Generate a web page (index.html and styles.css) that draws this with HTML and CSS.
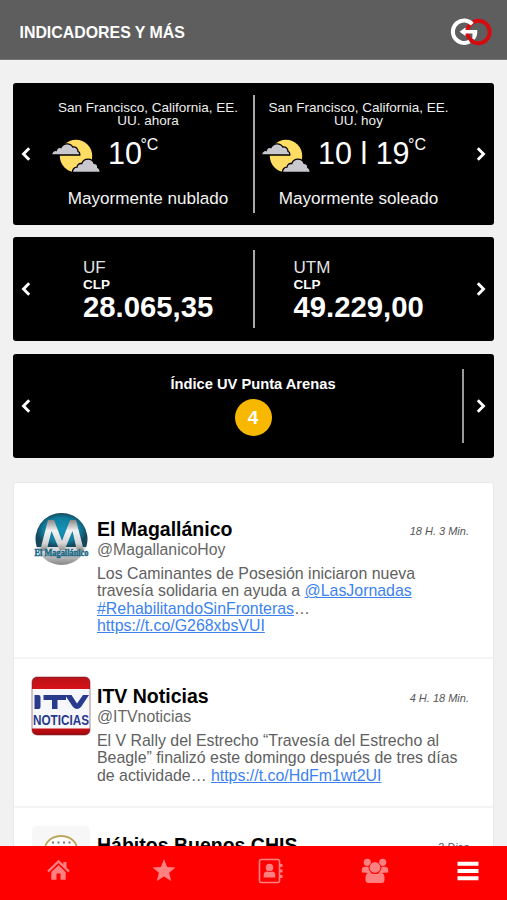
FILE: index.html
```html
<!DOCTYPE html>
<html lang="es">
<head>
<meta charset="utf-8">
<title>Indicadores y más</title>
<link rel="stylesheet" href="styles.css">
</head>
<body>
<svg class="defs" width="0" height="0">
  <symbol id="prev" viewBox="0 0 10 14"><path d="M8.2 1.2 2.5 7l5.700 5.800" fill="none" stroke="#fff" stroke-width="2.900"/></symbol>
  <symbol id="next" viewBox="0 0 10 14"><path d="M1.800 1.200 7.500 7l-5.700 5.800" fill="none" stroke="#fff" stroke-width="2.900"/></symbol>
  <symbol id="weather" viewBox="0 0 50 36">
    <circle cx="25" cy="18" r="16.200" fill="#ffdc64"/>
    <path d="M.5 17c0-3.200 2.400-4.800 4.800-4.500.5-2.600 2.800-3.700 4.700-2.900C12.200 4.800 19.500 4.600 21.700 9c3.200-.3 5.300 1.600 5.300 4.300 1.400.5 2 1.900 1.800 3.700z" fill="#c8c8ce" stroke="#000" stroke-width="1.300"/>
    <path d="M21.500 34.500c-.2-3 1.500-5.200 4.500-5.300.2-2.600 2.300-4.200 4.700-3.500 2.200-6 10.500-5.800 12.300-.4 2.400.2 4.100 1.800 3.700 4.100 1.900.7 2.700 2.600 2.600 5.100z" fill="#c8c8ce" stroke="#000" stroke-width="1.300"/>
  </symbol>
</svg>

<header class="topbar">
  <h1>INDICADORES Y MÁS</h1>
  <svg class="logo" viewBox="0 0 42 28">
    <circle cx="28.500" cy="14" r="11.200" fill="none" stroke="#d60b10" stroke-width="4"/>
    <path d="M22.300 6.100A11.200 11.200 0 1 0 19.500 23.500" fill="none" stroke="#fff" stroke-width="4"/>
    <path d="M9.500 13.700 15.500 9.500V12H27.300Q27.500 18.500 24.500 21.800L22.300 20.500 22.500 15.600H15.500V17.900z" fill="#fff"/>
  </svg>
</header>

<main class="content">
  <section class="card weather">
    <svg class="arrow"><use href="#prev"/></svg>
    <div class="slide">
      <p class="place">San Francisco, California, EE.<br>UU. ahora</p>
      <div class="temp"><svg class="sky"><use href="#weather"/></svg><span class="deg">10</span><span class="unit">°C</span></div>
      <p class="state">Mayormente nublado</p>
    </div>
    <div class="slide ruled">
      <p class="place">San Francisco, California, EE.<br>UU. hoy</p>
      <div class="temp"><svg class="sky"><use href="#weather"/></svg><span class="deg">10 l 19</span><span class="unit">°C</span></div>
      <p class="state">Mayormente soleado</p>
    </div>
    <svg class="arrow"><use href="#next"/></svg>
  </section>

  <section class="card money">
    <svg class="arrow"><use href="#prev"/></svg>
    <div class="slide">
      <p class="name">UF</p><p class="currency">CLP</p><p class="amount">28.065,35</p>
    </div>
    <div class="slide ruled">
      <p class="name">UTM</p><p class="currency">CLP</p><p class="amount">49.229,00</p>
    </div>
    <svg class="arrow"><use href="#next"/></svg>
  </section>

  <section class="card uv">
    <svg class="arrow"><use href="#prev"/></svg>
    <div class="slide wide">
      <p class="uv-title">Índice UV Punta Arenas</p>
      <span class="uv-value">4</span>
    </div>
    <svg class="arrow"><use href="#next"/></svg>
  </section>

  <section class="feed">
    <article class="post">
      <svg class="avatar" viewBox="0 0 60 60">
        <defs>
          <linearGradient id="steel" x1="0" y1="0" x2="0" y2="1"><stop offset="0" stop-color="#888"/><stop offset=".35" stop-color="#f4f4f4"/><stop offset=".75" stop-color="#d5d5d5"/><stop offset="1" stop-color="#888"/></linearGradient>
          <radialGradient id="teal"><stop offset="0" stop-color="#1493b4"/><stop offset=".7" stop-color="#107e9e"/><stop offset="1" stop-color="#17475b"/></radialGradient>
        </defs>
        <circle cx="30.500" cy="30" r="26" fill="url(#steel)"/>
        <path d="M5.800 38a26 26 0 1 1 49.400 0z" fill="url(#teal)"/>
        <path d="M9 42 17 11h6L31 32 39 11H45L53 42H46L41.500 22 33.500 41h-5L20.500 22 15.500 42z" fill="url(#steel)"/>
        <text x="3.500" y="46.500" class="av-mag" textLength="54" lengthAdjust="spacingAndGlyphs">El Magallánico</text>
      </svg>
      <div class="body">
        <div class="head"><h2>El Magallánico</h2><time>18 H. 3 Min.</time></div>
        <p class="handle">@MagallanicoHoy</p>
        <p class="text">Los Caminantes de Posesión iniciaron nueva<br>travesía solidaria en ayuda a <a>@LasJornadas</a><br><a>#RehabilitandoSinFronteras</a>…<br><a>https://t.co/G268xbsVUI</a></p>
      </div>
    </article>

    <article class="post">
      <svg class="avatar" viewBox="0 0 60 60">
        <defs>
          <clipPath id="tile"><rect x="1" y="1" width="58" height="58" rx="5"/></clipPath>
          <linearGradient id="red" x1="0" y1="0" x2="0" y2="1"><stop offset="0" stop-color="#b51318"/><stop offset=".2" stop-color="#d51218"/><stop offset=".88" stop-color="#c40c12"/><stop offset="1" stop-color="#98080c"/></linearGradient>
        </defs>
        <g clip-path="url(#tile)">
          <path d="M0 0h60v60H0z" fill="url(#red)"/>
          <path d="M0 13h60v39.500H0z" fill="#f6f7fa"/>
        </g>
        <rect x="1" y="1" width="58" height="58" rx="5" fill="none" stroke="#6e2630" stroke-opacity=".55"/>
        <path d="M3.500 19h4a2 2 0 0 1 2 2v10a2 2 0 0 1-2 2h-4zM12.500 19H35v5h-8.500v9H21v-9h-8.500zM34 19h6.500l5.500 8.500 6-8.500H58l-8 12q-4 4-8 0z" fill="#293b8d"/>
        <text x="2" y="48.500" class="av-itv" textLength="56" lengthAdjust="spacingAndGlyphs">NOTICIAS</text>
      </svg>
      <div class="body">
        <div class="head"><h2>ITV Noticias</h2><time>4 H. 18 Min.</time></div>
        <p class="handle">@ITVnoticias</p>
        <p class="text">El V Rally del Estrecho “Travesía del Estrecho al<br>Beagle” finalizó este domingo después de tres días<br>de actividade… <a>https://t.co/HdFm1wt2UI</a></p>
      </div>
    </article>

    <article class="post">
      <svg class="avatar" viewBox="0 0 60 60">
        <rect x="1" y="1" width="58" height="58" rx="4" fill="#f7f7f7"/>
        <ellipse cx="30" cy="24" rx="16" ry="13" fill="#fff" stroke="#bda75e" stroke-width="1.800"/>
        <path d="M21 17.500h19" stroke="#777" stroke-width="2" stroke-dasharray="2 3.500"/>
      </svg>
      <div class="body">
        <div class="head"><h2>Hábitos Buenos CHIS</h2><time>2 Dias</time></div>
      </div>
    </article>
  </section>
</main>

<nav class="tabs">
  <svg viewBox="0 0 28 28"><path d="M3 14.500 13.500 4.500 24 14.500" fill="none" stroke="#ff8080" stroke-width="2.400"/><path d="M18.300 5h3.200v7l-3.200-3zM6.300 15 13.500 8.200 20.700 15v7.800h-5.200v-6.300h-4v6.300H6.300z" fill="#ff8080"/></svg>
  <svg viewBox="0 0 28 28"><path d="m14 2.200 3.200 7.700 8.300.6-6.400 5.300 2.100 8.100-7.200-4.400-7.200 4.400 2.100-8.100L2.500 10.500l8.300-.6z" fill="#ff8080"/></svg>
  <svg viewBox="0 0 28 28"><rect x="3.500" y="2.500" width="20" height="23" rx="2" fill="none" stroke="#ff8080" stroke-width="1.600"/><path d="M24 7h2.500v3H24zM24 12.500h2.500v3H24zM24 18h2.500v3H24z" fill="#ff8080"/><circle cx="13.500" cy="10.500" r="3.800" fill="#ff8080"/><path d="M7.700 20.500v-2.300q0-3.700 3.500-3.700 2.300 1.200 4.600 0 3.500 0 3.500 3.700v2.300z" fill="#ff8080"/></svg>
  <svg viewBox="0 0 28 28"><g fill="#ff8080"><circle cx="6.300" cy="5.300" r="3.600"/><circle cx="21.700" cy="5.300" r="3.600"/><path d="M.800 15.500V13q0-3.300 3.300-3.300h3.300q.5 3.900 2.800 6l-2 .3zM27.200 15.500V13q0-3.300-3.300-3.300h-3.300q-.5 3.900-2.800 6l2 .3z"/><circle cx="14" cy="10.500" r="5.800" stroke="#f00" stroke-width=".8"/><path d="M4.500 23v-2.500q0-4.800 4.300-4.800 5.200 2.600 10.400 0 4.300 0 4.300 4.800V23q0 3-3 3h-13q-3 0-3-3z"/></g></svg>
  <svg viewBox="0 0 28 28"><path d="M3.500 6.700h21M3.500 14h21M3.500 21.200h21" stroke="#fff" stroke-width="4" stroke-linecap="butt"/></svg>
</nav>
</body>
</html>
```
FILE: styles.css
```css
* { box-sizing: border-box; }

body {
  margin: 0;
  height: 900px;
  display: flex;
  flex-direction: column;
  overflow: hidden;
  background: #f1f1f1;
  font-family: "Liberation Sans", Arial, sans-serif;
}

h1, h2, p { margin: 0; }
.defs { position: absolute; }

.topbar {
  flex: none;
  height: 60px;
  padding: 7px 15px 0 19.500px;
  display: flex;
  align-items: center;
  justify-content: space-between;
  background: #5e5e5e;
  border-bottom: 1px solid #777;
}
.topbar h1 { color: #fff; font-size: 15.900px; line-height: 20px; }
.logo { width: 42px; height: 28px; margin-top: -3px; }

.content {
  flex: 1;
  min-height: 0;
  overflow: hidden;
  padding: 22.500px 13px 0;
}

.card {
  display: grid;
  grid-template-columns: 30px 210px 211px 30px;
  align-items: center;
  margin-bottom: 12.500px;
  border-radius: 3px;
  background: #000;
  color: #fff;
}
.arrow { width: 10px; height: 14px; justify-self: center; margin-right: 4px; }
.arrow:last-child { margin: 0 0 0 3px; }
.ruled { border-left: 2px solid #aaa; }
.wide { grid-column: span 2; }

.weather { height: 142px; }
.weather .slide { height: 118px; padding-top: 6px; text-align: center; }
.weather .ruled { padding-right: 2px; }
.place { font-size: 13.500px; line-height: 13.500px; color: #eee; }
.temp { display: flex; height: 36px; margin-top: 5px; padding-left: 8px; text-align: left; }
.ruled .temp { padding-left: 6px; }
.sky { width: 50px; height: 36px; margin-top: 5px; }
.deg { margin-left: 7px; font-size: 30.500px; line-height: 34px; margin-top: 3px; }
.unit { font-size: 16px; line-height: 18px; margin-top: 3px; margin-left: -1.500px; }
.state { margin-top: 20px; font-size: 17.100px; line-height: 20px; color: #f4f4f4; }

.money { height: 104px; }
.money .slide { height: 78px; padding: 8px 0 0 40px; }
.money .ruled { padding-left: 38.500px; }
.name { font-size: 17px; line-height: 20px; color: #e4e4e4; }
.currency { font-size: 13.500px; line-height: 14px; font-weight: bold; }
.amount { font-size: 29.300px; line-height: 29px; font-weight: bold; }

.uv { height: 104px; }
.uv .slide {
  height: 74px;
  padding: 7px 0 0 1px;
  display: flex;
  flex-direction: column;
  align-items: center;
  border-right: 2px solid #999;
}
.uv-title { font-size: 14.700px; line-height: 17px; font-weight: bold; }
.uv-value {
  width: 37px;
  height: 37px;
  margin-top: 6px;
  border-radius: 50%;
  background: #f9b800;
  font-size: 19px;
  line-height: 38px;
  font-weight: bold;
  text-align: center;
}

.feed {
  margin-top: 24.500px;
  border: 1px solid #e9e9e9;
  border-radius: 3px;
  background: #fff;
}
.post {
  display: flex;
  gap: 6px;
  padding: 17px 24px 0 17px;
  border-bottom: 2px solid #f4f4f4;
}
.post:nth-child(1) { height: 176px; padding-top: 26px; }
.post:nth-child(2) { height: 149px; }
.post:nth-child(3) { height: 149px; }
.avatar { flex: none; width: 60px; height: 60px; }
.body { flex: 1; padding-top: 8px; }
.head { display: flex; justify-content: space-between; align-items: center; height: 24px; }
.head h2 { font-size: 19.500px; line-height: 24px; color: #000; }
.head time { margin-top: 3px; font-size: 11px; font-style: italic; color: #555; }
.handle { font-size: 15.800px; line-height: 18px; color: #666; }
.text { margin-top: 6px; font-size: 15.900px; line-height: 17.300px; color: #606060; white-space: nowrap; }
.text a { color: #3b82f0; text-decoration: underline; }

.av-mag { font: bold 9.500px "Liberation Serif", serif; fill: #1a6a87; stroke: #1a6a87; stroke-width: .5px; }
.av-itv { font: bold 15.500px "Liberation Sans", sans-serif; fill: #293b8d; }

.tabs {
  flex: none;
  height: 54px;
  padding-left: 6px;
  display: grid;
  grid-template-columns: repeat(4, 105.500px) 1fr;
  justify-items: center;
  align-items: center;
  background: #f00;
}
.tabs svg { width: 28px; height: 28px; margin-top: -4px; }
```
